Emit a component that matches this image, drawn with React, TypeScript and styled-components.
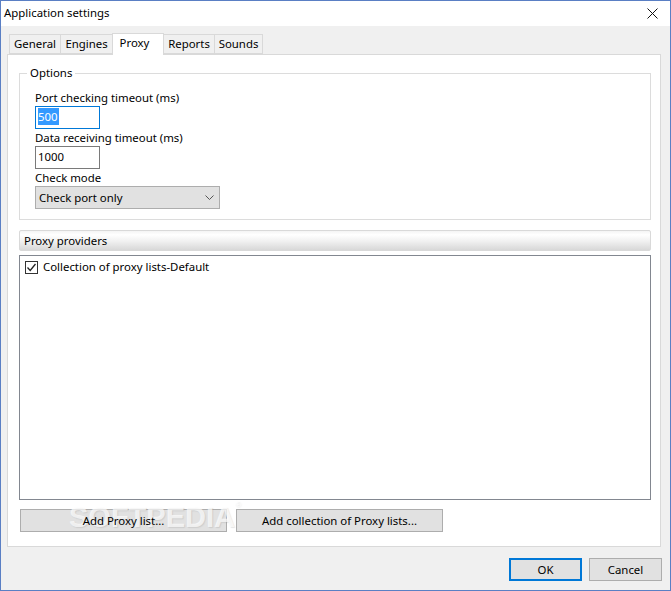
import React from 'react';
import styled, { createGlobalStyle } from 'styled-components';

const Global = createGlobalStyle`
  html, body { margin: 0; padding: 0; background: #f0f0f0; }
  * { box-sizing: border-box; }
`;

const Window = styled.div`
  position: relative;
  width: 671px;
  height: 591px;
  display: flex;
  flex-direction: column;
  background: #f0f0f0;
  border: 1px solid #5a7fc4;
  font-family: "Noto Sans", "Open Sans", sans-serif;
  font-size: 11.4px;
  color: #000;
  overflow: hidden;
`;

const TitleBar = styled.div`
  height: 25px;
  flex: none;
  background: #fff;
  display: flex;
  align-items: center;
  justify-content: space-between;
  padding: 0 12px 1px 3px;
`;

const TitleText = styled.span`
  margin-top: -2px;
`;

const Body = styled.div`
  flex: 1;
  display: flex;
  flex-direction: column;
  padding: 7px 9px 0 6px;
`;

const TabRow = styled.div`
  display: flex;
  align-items: flex-end;
  height: 21px;
  padding-left: 3px;
  position: relative;
  z-index: 1;
`;

const Tab = styled.div<{ $w: number; $active?: boolean }>`
  height: ${p => (p.$active ? 22 : 20)}px;
  width: ${p => p.$w}px;
  margin-bottom: ${p => (p.$active ? -1 : 0)}px;
  margin-left: -1px;
  display: flex;
  align-items: center;
  justify-content: center;
  background: ${p => (p.$active ? '#fff' : '#f0f0f0')};
  border: 1px solid #d9d9d9;
  border-bottom: ${p => (p.$active ? 'none' : '1px solid #d9d9d9')};
  z-index: ${p => (p.$active ? 2 : 1)};
  padding-bottom: ${p => (p.$active ? 5 : 1)}px;
  padding-right: ${p => (p.$active ? 7 : 0)}px;
`;

const Panel = styled.div`
  height: 493px;
  background: #fff;
  border: 1px solid #d9d9d9;
  padding: 18px 9px 0 11px;
  display: flex;
  flex-direction: column;
`;

const Options = styled.fieldset`
  margin: 0;
  height: 147px;
  flex: none;
  border: 1px solid #dcdcdc;
  padding: 15px 0 0 15px;
  display: flex;
  flex-direction: column;
  align-items: flex-start;
  position: relative;
`;

const Legend = styled.span`
  position: absolute;
  top: -10px;
  left: 7px;
  padding: 0 3px;
  background: #fff;
  line-height: 17px;
`;

const FieldLabel = styled.div`
  line-height: 17px;
  height: 17px;
`;

const NumberBox = styled.div<{ $focused?: boolean }>`
  width: 65px;
  height: 23px;
  border: 1px solid ${p => (p.$focused ? '#0078d7' : '#7a7a7a')};
  background: #fff;
  padding: 0 2px;
  line-height: 19px;
`;

const Selected = styled.span`
  background: #3399ff;
  color: #fff;
  display: inline-block;
  height: 17px;
  line-height: 17px;
  margin-top: 1px;
  vertical-align: top;
  padding: 0 1px 0 0;
`;

const Select = styled.div`
  width: 185px;
  height: 23px;
  border: 1px solid #adadad;
  background: #e1e1e1;
  display: flex;
  align-items: center;
  justify-content: space-between;
  padding: 0 5px 0 3px;
`;

const ProviderBar = styled.div`
  margin-top: 10px;
  height: 21px;
  flex: none;
  border: 1px solid #d9d9d9;
  border-radius: 2px;
  background: linear-gradient(#f4f4f4 0%, #ffffff 20%, #f0f0f0 55%, #d8d8d8 100%);
  padding-left: 4px;
  line-height: 19px;
`;

const List = styled.div`
  margin-top: 4px;
  height: 245px;
  flex: none;
  border: 1px solid #828790;
  background: #fff;
  padding: 3px 5px;
  display: flex;
  flex-direction: column;
`;

const ListItem = styled.div`
  display: flex;
  align-items: center;
  gap: 5px;
  height: 16px;
`;

const ItemText = styled.span`
  margin-top: -2px;
`;

const Check = styled.div`
  width: 13px;
  height: 13px;
  border: 1px solid #333;
  background: #fff;
  display: flex;
  align-items: center;
  justify-content: center;
`;

const ListButtons = styled.div`
  display: flex;
  gap: 9px;
  margin-top: 9px;
  padding-left: 1px;
`;

const Button = styled.div<{ $w: number; $default?: boolean }>`
  width: ${p => p.$w}px;
  height: 23px;
  background: #e1e1e1;
  border: ${p => (p.$default ? '2px solid #0078d7' : '1px solid #adadad')};
  display: flex;
  align-items: center;
  justify-content: center;
`;

const ButtonLabel = styled.span`
  position: relative;
  z-index: 2;
`;

const Footer = styled.div`
  display: flex;
  justify-content: flex-end;
  gap: 7px;
  margin-top: 11px;
  margin-right: -1px;
`;

const Watermark = styled.div`
  position: absolute;
  z-index: 1;
  left: 68px;
  top: 499px;
  font-family: "Liberation Sans", sans-serif;
  font-weight: 700;
  font-size: 29px;
  color: rgba(255, 255, 255, 0.7);
  text-shadow: 1px 1px 1px rgba(150, 150, 150, 0.25);
  pointer-events: none;
  white-space: nowrap;
`;

const WatermarkMark = styled.span`
  font-size: 8px;
  font-weight: 400;
  vertical-align: 20px;
`;

export default function App() {
  return (
    <Window>
      <Global />
      <TitleBar>
        <TitleText>Application settings</TitleText>
        <svg width="11" height="11" viewBox="0 0 11 11">
          <path d="M0.5 0.5L10.5 10.5M10.5 0.5L0.5 10.5" stroke="#111" strokeWidth="1" fill="none" />
        </svg>
      </TitleBar>
      <Body>
        <TabRow>
          <Tab $w={52}>General</Tab>
          <Tab $w={53}>Engines</Tab>
          <Tab $w={52} $active>Proxy</Tab>
          <Tab $w={52}>Reports</Tab>
          <Tab $w={49}>Sounds</Tab>
        </TabRow>
        <Panel>
          <Options>
            <Legend>Options</Legend>
            <FieldLabel>Port checking timeout (ms)</FieldLabel>
            <NumberBox $focused><Selected>500</Selected></NumberBox>
            <FieldLabel>Data receiving timeout (ms)</FieldLabel>
            <NumberBox>1000</NumberBox>
            <FieldLabel>Check mode</FieldLabel>
            <Select>
              <span>Check port only</span>
              <svg width="9" height="5" viewBox="0 0 9 5">
                <path d="M0.5 0.5L4.5 4.5L8.5 0.5" stroke="#555" strokeWidth="1" fill="none" />
              </svg>
            </Select>
          </Options>
          <ProviderBar>Proxy providers</ProviderBar>
          <List>
            <ListItem>
              <Check>
                <svg width="11" height="11" viewBox="0 0 11 11">
                  <path d="M1.5 5.5L4.2 8.5L9.5 2" stroke="#222" strokeWidth="1.3" fill="none" />
                </svg>
              </Check>
              <ItemText>Collection of proxy lists-Default</ItemText>
            </ListItem>
          </List>
          <ListButtons>
            <Button $w={207}><ButtonLabel>Add Proxy list...</ButtonLabel></Button>
            <Button $w={207}><ButtonLabel>Add collection of Proxy lists...</ButtonLabel></Button>
          </ListButtons>
        </Panel>
        <Footer>
          <Button $w={73} $default><ButtonLabel>OK</ButtonLabel></Button>
          <Button $w={73}><ButtonLabel>Cancel</ButtonLabel></Button>
        </Footer>
      </Body>
      <Watermark>SOFTPEDIA<WatermarkMark>®</WatermarkMark></Watermark>
    </Window>
  );
}
